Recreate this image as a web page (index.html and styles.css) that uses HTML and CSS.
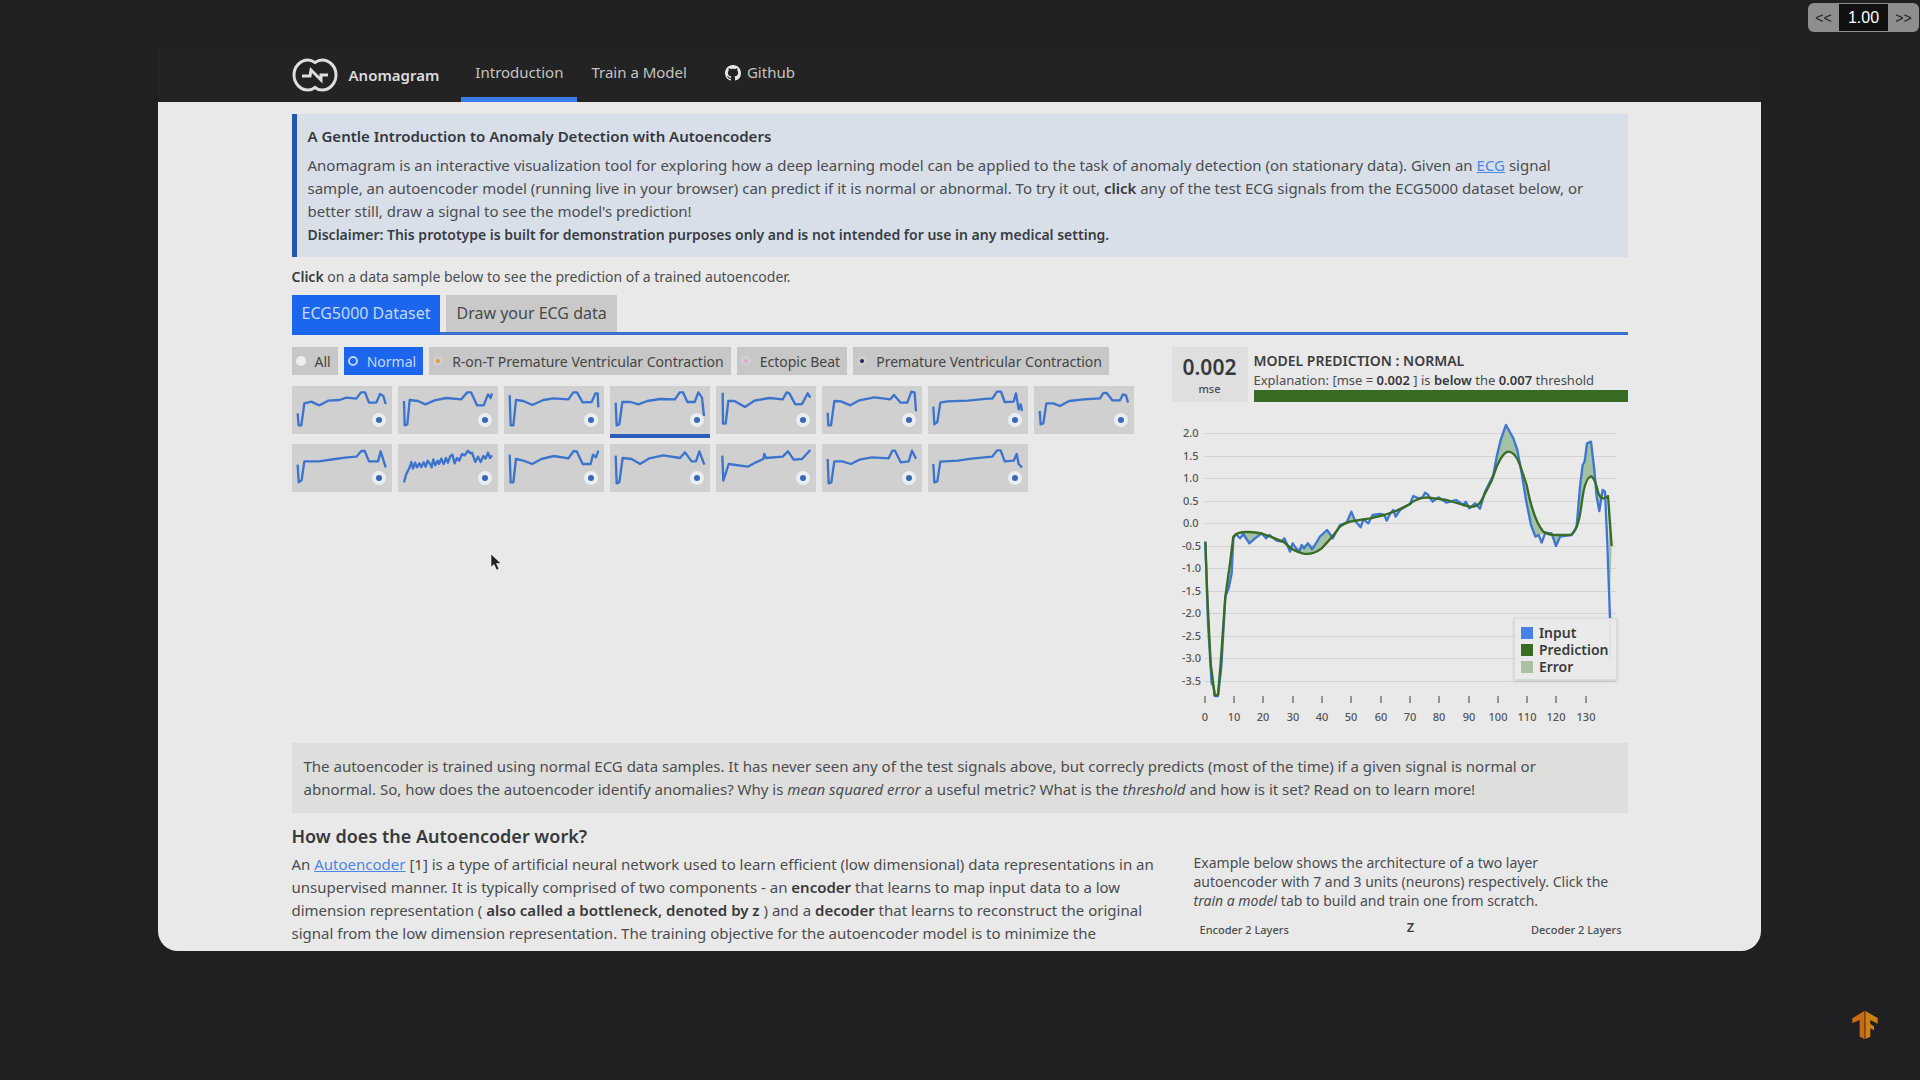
FILE: index.html
```html
<!DOCTYPE html>
<html lang="en">
<head>
<meta charset="utf-8">
<title>Anomagram</title>
<link rel="stylesheet" href="styles.css">
</head>
<body>
<div class="speed">
  <button type="button" class="speed-step">&lt;&lt;</button>
  <input class="speed-value" type="text" value="1.00" aria-label="Playback speed">
  <button type="button" class="speed-step">&gt;&gt;</button>
</div>

<div class="window">
  <header class="topbar">
    <div class="container topbar-row">
      <a class="brand" href="#">
        <svg class="brand-mark" viewBox="0 0 46 34" aria-hidden="true">
          <path d="M23 4.500C20 2.500 18 2 16 2A14 15 0 0 0 16 32C18 32 20.500 31.500 23 29.500C25.500 31.500 28 32 30 32A14 15 0 0 0 30 2C28 2 26 2.500 23 4.500Z" fill="none" stroke="#dedede" stroke-width="3"/>
          <path d="M10 18H18L19 12L29 22V17H36" fill="none" stroke="#dedede" stroke-width="3"/>
        </svg>
        <span>Anomagram</span>
      </a>
      <nav class="nav">
        <a class="nav-item nav-item-active" href="#">Introduction</a>
        <a class="nav-item" href="#">Train a Model</a>
        <a class="nav-item nav-github" href="#">
          <svg class="github-mark" viewBox="0 0 16 16" aria-hidden="true"><path fill="#e6e6e6" d="M8 0C3.580 0 0 3.580 0 8c0 3.540 2.290 6.530 5.470 7.590.4.070.55-.17.55-.38 0-.19-.01-.82-.01-1.490-2.010.37-2.530-.49-2.690-.94-.09-.23-.48-.94-.82-1.130-.28-.15-.68-.52-.01-.53.63-.01 1.080.58 1.230.82.72 1.210 1.870.87 2.330.66.070-.52.28-.87.51-1.070-1.780-.2-3.640-.89-3.640-3.950 0-.87.31-1.590.82-2.150-.08-.2-.36-1.020.08-2.120 0 0 .67-.21 2.200.82.64-.18 1.320-.27 2-.27s1.360.09 2 .27c1.530-1.040 2.200-.82 2.200-.82.44 1.100.16 1.920.08 2.120.51.56.82 1.270.82 2.150 0 3.070-1.870 3.750-3.650 3.950.29.25.54.73.54 1.480 0 1.070-.01 1.930-.01 2.200 0 .21.15.46.55.38A8.010 8.010 0 0 0 16 8c0-4.420-3.580-8-8-8z"/></svg>
          <span>Github</span>
        </a>
      </nav>
    </div>
  </header>

  <main class="container content">
    <section class="intro">
      <h1 class="intro-title">A Gentle Introduction to Anomaly Detection with Autoencoders</h1>
      <p>Anomagram is an interactive visualization tool for exploring how a deep learning model can be applied to the task of anomaly detection (on stationary data). Given an <a class="link" href="#">ECG</a> signal<br>sample, an autoencoder model (running live in your browser) can predict if it is normal or abnormal. To try it out, <b>click</b> any of the test ECG signals from the ECG5000 dataset below, or<br>better still, draw a signal to see the model's prediction!</p>
      <p class="disclaimer">Disclaimer: This prototype is built for demonstration purposes only and is not intended for use in any medical setting.</p>
    </section>

    <p class="hint"><b>Click</b> on a data sample below to see the prediction of a trained autoencoder.</p>

    <div class="tabs">
      <button type="button" class="tab tab-active">ECG5000 Dataset</button>
      <button type="button" class="tab">Draw your ECG data</button>
    </div>

    <div class="workspace">
      <section class="samples">
        <div class="filters">
          <button type="button" class="filter"><i class="dot dot-all"></i>All</button>
          <button type="button" class="filter filter-active"><i class="dot dot-normal"></i>Normal</button>
          <button type="button" class="filter"><i class="dot dot-ront"></i>R-on-T Premature Ventricular Contraction</button>
          <button type="button" class="filter"><i class="dot dot-ectopic"></i>Ectopic Beat</button>
          <button type="button" class="filter"><i class="dot dot-pvc"></i>Premature Ventricular Contraction</button>
        </div>
        <div class="thumbs">
          <button type="button" class="thumb" aria-label="Sample 1"><svg viewBox="0 0 300 144"><path d="M17 82L20 118L28 118L37 52L58 47L70 53L83 58L108 44L143 42L163 35L193 38L207 19L219 19L231 50L253 50L264 24L274 30L281 54"/></svg></button>
          <button type="button" class="thumb" aria-label="Sample 2"><svg viewBox="0 0 300 144"><path d="M18 45L20 118L28 115L35 42L60 45L82 55L110 43L145 36L190 40L208 19L219 19L237 58L257 58L270 25L278 36L282 22"/></svg></button>
          <button type="button" class="thumb" aria-label="Sample 3"><svg viewBox="0 0 300 144"><path d="M17 28L20 118L28 118L36 42L58 45L85 57L118 42L148 37L193 40L208 19L219 19L236 49L263 48L274 22L281 22L283 64"/></svg></button>
          <button type="button" class="thumb thumb-active" aria-label="Sample 4"><svg viewBox="0 0 300 144"><path d="M17 50L20 118L28 115L37 48L62 48L85 55L112 45L150 39L195 40L209 19L219 19L232 48L254 48L265 19L276 35L282 90"/></svg></button>
          <button type="button" class="thumb" aria-label="Sample 5"><svg viewBox="0 0 300 144"><path d="M20 20L21 113L29 113L37 45L55 45L87 63L115 44L160 36L200 40L212 19L220 22L238 55L258 54L275 22L283 35"/></svg></button>
          <button type="button" class="thumb" aria-label="Sample 6"><svg viewBox="0 0 300 144"><path d="M17 80L19 118L27 118L37 45L57 46L85 58L112 43L157 34L205 40L216 27L236 50L256 50L268 17L278 20L282 76"/></svg></button>
          <button type="button" class="thumb" aria-label="Sample 7"><svg viewBox="0 0 300 144"><path d="M16 62L19 115L28 108L37 50L58 46L120 44L180 38L193 38L207 17L219 17L230 48L257 47L264 22L272 70L278 55L282 75"/></svg></button>
          <button type="button" class="thumb" aria-label="Sample 8"><svg viewBox="0 0 300 144"><path d="M17 75L20 115L28 112L37 52L58 52L78 60L105 45L150 40L198 37L208 21L218 21L235 43L258 43L267 25L276 28L282 50"/></svg></button>
          <button type="button" class="thumb" aria-label="Sample 9"><svg viewBox="0 0 300 144"><path d="M17 62L20 115L29 108L37 52L80 52L130 45L165 40L193 38L208 21L218 21L231 52L258 52L266 22L281 70"/></svg></button>
          <button type="button" class="thumb" aria-label="Sample 10"><svg viewBox="0 0 300 144"><path d="M18 115L24 92L35 70L40 54L45 74L51 56L57 70L64 58L70 70L77 55L83 68L89 50L95 58L101 70L106 46L112 64L119 50L123 60L130 44L137 60L144 42L150 56L157 36L163 32L170 58L177 42L184 50L192 30L200 34L210 20L217 28L222 26L232 54L240 38L248 54L256 36L263 44L270 26L276 42L282 34"/></svg></button>
          <button type="button" class="thumb" aria-label="Sample 11"><svg viewBox="0 0 300 144"><path d="M17 32L20 115L28 115L36 45L58 50L85 60L112 45L150 36L193 43L209 21L218 22L236 60L260 60L267 32L276 40L283 20"/></svg></button>
          <button type="button" class="thumb" aria-label="Sample 12"><svg viewBox="0 0 300 144"><path d="M17 35L20 118L28 115L38 42L65 45L90 60L118 43L160 34L210 42L225 25L245 52L258 52L268 22L283 62"/></svg></button>
          <button type="button" class="thumb" aria-label="Sample 13"><svg viewBox="0 0 300 144"><path d="M19 35L22 110L30 85L38 60L95 68L120 55L142 45L145 30L150 42L200 38L216 22L233 47L258 45L283 18"/></svg></button>
          <button type="button" class="thumb" aria-label="Sample 14"><svg viewBox="0 0 300 144"><path d="M17 45L20 118L28 115L37 52L60 52L87 60L112 47L150 40L200 43L211 20L219 20L236 55L260 52L270 20L282 44"/></svg></button>
          <button type="button" class="thumb" aria-label="Sample 15"><svg viewBox="0 0 300 144"><path d="M16 60L19 115L28 112L37 53L90 50L130 44L193 38L207 19L218 19L230 52L257 50L266 30L272 60L282 70"/></svg></button>
        </div>
      </section>

      <section class="result">
        <div class="verdict">
          <div class="score"><b class="score-value">0.002</b><span class="score-unit">mse</span></div>
          <div class="verdict-text">
            <h2 class="verdict-title">MODEL PREDICTION : NORMAL</h2>
            <p class="verdict-note">Explanation: [mse = <b>0.002</b> ] is <b>below</b> the <b>0.007</b> threshold</p>
            <div class="verdict-bar"></div>
          </div>
        </div>
        <div class="chart">
          <svg class="chart-plot" viewBox="0 0 456 325" role="img" aria-label="Input and predicted signal">
            <g stroke="#d3d3d3" stroke-width="1">
              <path d="M33 31.500H444M33 54.500H444M33 76.500H444M33 99.500H444M33 121.500H444M33 144.500H444M33 166.500H444M33 189.500H444M33 211.500H444M33 234.500H444M33 256.500H444M33 279.500H444"/>
            </g>
            <path stroke="#777" stroke-width="1.500" d="M33 294v7M62 294v7M91 294v7M121 294v7M150 294v7M179 294v7M209 294v7M238 294v7M267 294v7M297 294v7M326 294v7M355 294v7M384 294v7M414 294v7"/>
            <g class="axis-y">
              <text x="11" y="35">2.0</text><text x="11" y="58">1.5</text><text x="11" y="80">1.0</text><text x="11" y="103">0.5</text><text x="11" y="125">0.0</text><text x="10" y="148">-0.5</text><text x="10" y="170">-1.0</text><text x="10" y="193">-1.5</text><text x="10" y="215">-2.0</text><text x="10" y="238">-2.5</text><text x="10" y="260">-3.0</text><text x="10" y="283">-3.5</text>
            </g>
            <g class="axis-x">
              <text x="33" y="319">0</text><text x="62" y="319">10</text><text x="91" y="319">20</text><text x="121" y="319">30</text><text x="150" y="319">40</text><text x="179" y="319">50</text><text x="209" y="319">60</text><text x="238" y="319">70</text><text x="267" y="319">80</text><text x="297" y="319">90</text><text x="326" y="319">100</text><text x="355" y="319">110</text><text x="384" y="319">120</text><text x="414" y="319">130</text>
            </g>
            <g transform="translate(8 8) scale(.333333)" fill="none" stroke-linejoin="round">
              <path fill="#a3c1a4" d="M940 195L962 90L978 45L1012 120L1025 190L1020 165Q1005 125 985 125Q970 125 950 170ZM1022 175L1038 270L1053 345L1066 380L1096 368L1090 365Q1060 330 1040 225ZM1185 360L1200 230L1208 165L1221 100L1233 95L1245 205L1234 199Q1215 200 1205 280ZM180 370L208 400L245 370ZM345 420L384 400L403 408L441 360L455 380L425 415Q400 435 370 431ZM1112 372L1128 408L1142 376ZM500 338L514 305L525 332ZM136 560L155 490L160 380ZM1250 235L1258 303L1268 260ZM1284 258L1290 560L1295 408Z"/>
              <path stroke="#3f77cf" stroke-width="7" d="M76 395L84 640L95 820L101 830L104 858L114 858L124 770L136 560L146 535L155 490L160 385L168 372L180 385L190 372L208 400L225 385L245 370L258 385L268 375L290 392L305 395L313 385L322 405L330 425L338 400L348 415L358 425L365 405L372 415L384 400L396 418L403 408L420 380L441 360L450 372L458 385L480 345L500 338L514 305L525 332L542 352L550 328L565 340L578 315L600 312L613 315L620 332L630 312L640 300L647 320L660 300L690 282L700 258L715 265L728 262L735 248L742 252L758 275L775 262L800 278L828 270L850 285L857 275L868 295L885 280L900 296L915 245L940 195L950 140L962 90L978 45L1000 85L1012 120L1025 190L1038 270L1053 345L1066 380L1076 375L1085 398L1096 368L1115 370L1128 408L1140 380L1175 375L1190 350L1200 230L1208 165L1214 155L1221 100L1233 95L1243 180L1250 260L1258 303L1268 240L1275 245L1282 400L1290 625L1291 745"/>
              <path stroke="#386b24" stroke-width="7" d="M76 395L82 560L92 760L104 855L114 855L122 760L136 560L150 460L160 380Q170 366 200 366Q235 366 258 375L310 395Q340 425 370 431Q400 435 425 415Q455 385 480 350Q500 335 520 333L570 325L613 315L650 302L690 282Q705 266 740 262L800 270L850 285L870 290Q895 292 905 270L935 212L950 170Q970 125 985 125Q1005 125 1020 165L1040 225Q1060 330 1090 365Q1105 375 1130 375L1172 374Q1195 365 1205 280Q1215 200 1234 199Q1245 205 1255 250Q1265 275 1284 258L1295 408"/>
            </g>
          </svg>
          <ul class="legend">
            <li><i class="swatch swatch-input"></i>Input</li>
            <li><i class="swatch swatch-prediction"></i>Prediction</li>
            <li><i class="swatch swatch-error"></i>Error</li>
          </ul>
        </div>
      </section>
    </div>

    <p class="note">The autoencoder is trained using normal ECG data samples. It has never seen any of the test signals above, but correcly predicts (most of the time) if a given signal is normal or<br>abnormal. So, how does the autoencoder identify anomalies? Why is <em>mean squared error</em> a useful metric? What is the <em>threshold</em> and how is it set? Read on to learn more!</p>

    <h2 class="section-title">How does the Autoencoder work?</h2>
    <div class="explain">
      <p class="explain-text">An <a class="link" href="#">Autoencoder</a> [1] is a type of artificial neural network used to learn efficient (low dimensional) data representations in an<br>unsupervised manner. It is typically comprised of two components - an <b>encoder</b> that learns to map input data to a low<br>dimension representation ( <b>also called a bottleneck, denoted by z</b> ) and a <b>decoder</b> that learns to reconstruct the original<br>signal from the low dimension representation. The training objective for the autoencoder model is to minimize the</p>
      <aside class="example">
        <p>Example below shows the architecture of a two layer<br>autoencoder with 7 and 3 units (neurons) respectively. Click the<br><em>train a model</em> tab to build and train one from scratch.</p>
        <div class="layers"><span>Encoder 2 Layers</span><b class="layers-z">Z</b><span class="layers-end">Decoder 2 Layers</span></div>
      </aside>
    </div>
  </main>

  <svg class="pointer" viewBox="0 0 12 18" aria-hidden="true"><path d="M1 1V14L4 11.500L6.500 17L9 16L6.500 10.500H11Z" fill="#222" stroke="#f5f5f5" stroke-width=".6"/></svg>
</div>

<svg class="watermark" viewBox="0 0 78 84" aria-hidden="true">
  <path fill="#cb6a12" d="M37 0V84L23 77V27L1 37V22Z"/>
  <path fill="#d07f12" d="M40 0L77 21V38L55 27V39L66 46V58L55 52V77L40 84Z"/>
  <path fill="#8a4f14" d="M37 0H40V84H37Z"/>
</svg>
</body>
</html>
```
FILE: styles.css
```css
*, *::after {
  box-sizing: border-box;
}

body {
  margin: 0;
  min-height: 100vh;
  padding: 48px 159px 64px 158px;
  background: #201f22;
  color: #4b4d50;
  font: 15px/23px "Noto Sans", sans-serif;
}

h1, h2, p, ul {
  margin: 0;
  padding: 0;
}

button, input {
  margin: 0;
  border: 0;
  border-radius: 0;
  font: inherit;
}

b {
  color: #38393c;
  font-weight: 600;
}

.link {
  color: #4a86e8;
}

.window {
  position: relative;
  overflow: hidden;
  border-radius: 0 0 20px 20px;
  background: #e9e9e9;
}

.container {
  max-width: 1336px;
  margin: 0 auto;
}

/* Top bar */
.topbar {
  background: #232323;
}

.topbar-row {
  display: flex;
  height: 54px;
  gap: 22px;
}

.brand {
  display: flex;
  align-items: center;
  gap: 11px;
  color: #dcdcdc;
  font-weight: 600;
  text-decoration: none;
}

.brand-mark {
  width: 46px;
  height: 34px;
}

.nav {
  display: flex;
}

.nav-item {
  display: flex;
  align-items: center;
  padding: 0 14px;
  border-bottom: 5px solid transparent;
  color: #c4c4c4;
  text-decoration: none;
}

.nav-item-active {
  border-bottom-color: #3b7de6;
}

.nav-github {
  gap: 6px;
  margin-left: 10px;
}

.github-mark {
  width: 16px;
  height: 16px;
}

/* Introduction */
.content {
  padding: 12px 0 6px;
}

.intro {
  padding: 11px 0 11px 11px;
  border-left: 5px solid #2258b4;
  background: #d8dfe8;
}

.intro-title {
  margin-bottom: 6px;
  color: #34383f;
  font-size: 15px;
  font-weight: 600;
  line-height: 23px;
}

.disclaimer {
  color: #383c44;
  font-size: 14px;
  font-weight: 600;
}

.hint {
  margin: 8px 0 7px;
  font-size: 14px;
}

.tabs {
  display: flex;
  gap: 6px;
  border-bottom: 3px solid #3a70cf;
}

.tab {
  height: 37px;
  padding: 0 10px;
  background: #c9c9c9;
  color: #48494b;
  font-size: 16px;
}

.tab-active {
  height: 40px;
  margin-bottom: -3px;
  padding-bottom: 3px;
  background: #1b66ec;
  color: #c3d8fb;
}

/* Samples */
.workspace {
  display: grid;
  grid-template-columns: 1fr 456px;
  margin-top: 12px;
}

.filters {
  display: flex;
  gap: 6px;
  margin-bottom: 11px;
}

.filter {
  display: flex;
  align-items: center;
  gap: 9px;
  height: 28px;
  padding: 0 7px 0 4px;
  background: #c7c7c7;
  color: #444;
  font-size: 14px;
  white-space: nowrap;
}

.filter-active {
  background: #1b66ec;
  color: #c3d8fb;
}

.dot {
  width: 10px;
  height: 10px;
  border: 3px solid #cfcfcf;
  border-radius: 50%;
}

.dot-all {
  border-color: #eee;
  background: #eee;
}

.dot-normal {
  border: 2px solid #b9d2fb;
}

.dot-ront {
  background: #e59a2c;
}

.dot-ectopic {
  background: #e3a3dc;
}

.dot-pvc {
  background: #2b1f6b;
}

.thumbs {
  display: flex;
  flex-wrap: wrap;
  gap: 6px;
}

.thumb {
  position: relative;
  width: 100px;
  height: 52px;
  padding: 0;
  border-bottom: 4px solid transparent;
  background: #d0d0d0;
  background-clip: padding-box;
}

.thumb svg {
  display: block;
  width: 100px;
  height: 48px;
  fill: none;
  stroke: #3c74cd;
  stroke-width: 7;
  stroke-linejoin: round;
}

.thumb::after {
  content: "";
  position: absolute;
  right: 6px;
  bottom: 7px;
  width: 14px;
  height: 14px;
  border: 4px solid #e9eef3;
  border-radius: 50%;
  background: #3a68b5;
}

.thumb-active {
  border-bottom-color: #2a5fbb;
}

/* Prediction */
.verdict {
  display: flex;
  gap: 6px;
}

.score {
  display: flex;
  flex-direction: column;
  align-items: center;
  width: 76px;
  height: 55px;
  padding-top: 8px;
  background: #dfdfdf;
}

.score-value {
  font-size: 21px;
  line-height: 24px;
}

.score-unit {
  font-size: 11px;
  font-weight: 500;
  line-height: 19px;
}

.verdict-text {
  flex: 1;
}

.verdict-title {
  padding-top: 4px;
  color: #3c3d40;
  font-size: 14px;
  font-weight: 600;
  line-height: 20px;
}

.verdict-note {
  font-size: 13px;
  line-height: 19px;
}

.verdict-bar {
  height: 12px;
  background: #386b24;
}

.chart {
  position: relative;
}

.chart-plot {
  display: block;
  width: 100%;
}

.axis-y, .axis-x {
  fill: #555;
  font-size: 11px;
  font-weight: 500;
}

.axis-x {
  text-anchor: middle;
}

.legend {
  position: absolute;
  right: 11px;
  bottom: 47px;
  padding: 5px 7px 4px 6px;
  border: 1px solid #dadada;
  background: rgba(233, 233, 233, .93);
  box-shadow: 0 1px 3px rgba(0, 0, 0, .15);
  color: #3a3b3d;
  font-size: 14px;
  font-weight: 600;
  line-height: 17px;
  list-style: none;
}

.legend li {
  display: flex;
  align-items: center;
  gap: 6px;
}

.swatch {
  width: 12px;
  height: 12px;
}

.swatch-input {
  background: #4a82e4;
}

.swatch-prediction {
  background: #386b24;
}

.swatch-error {
  background: #a9c2a4;
}

/* Explanation */
.note {
  margin-top: 16px;
  padding: 12px;
  background: #dededd;
}

.section-title {
  margin: 10px 0 4px;
  color: #38393b;
  font-size: 18px;
  font-weight: 600;
  line-height: 26px;
}

.explain {
  display: grid;
  grid-template-columns: 1fr 434px;
}

.example {
  font-size: 14px;
  line-height: 19px;
}

.layers {
  display: grid;
  grid-template-columns: 1fr auto 1fr;
  margin-top: 10px;
  padding: 0 6px;
  font-size: 11px;
  font-weight: 500;
}

.layers-z {
  font-size: 13px;
  line-height: 14px;
}

.layers-end {
  text-align: right;
}

/* Overlays */
.pointer {
  position: absolute;
  left: 332px;
  top: 505px;
  width: 12px;
  height: 18px;
}

.speed {
  position: absolute;
  top: 3px;
  right: 1px;
  display: flex;
  height: 29px;
}

.speed-step {
  width: 31px;
  padding: 0;
  border-radius: 6px 0 0 6px;
  background: #8e8e8e;
  color: #222;
  font: 14px "Liberation Sans", sans-serif;
}

.speed-step:last-child {
  border-radius: 0 6px 6px 0;
}

.speed-value {
  width: 49px;
  padding: 0;
  border: 1px solid #8e8e8e;
  border-width: 1px 0;
  background: #101010;
  color: #fff;
  font: 16px "Liberation Sans", sans-serif;
  text-align: center;
}

.watermark {
  position: fixed;
  right: 42px;
  bottom: 41px;
  width: 26px;
  height: 28px;
}
```
